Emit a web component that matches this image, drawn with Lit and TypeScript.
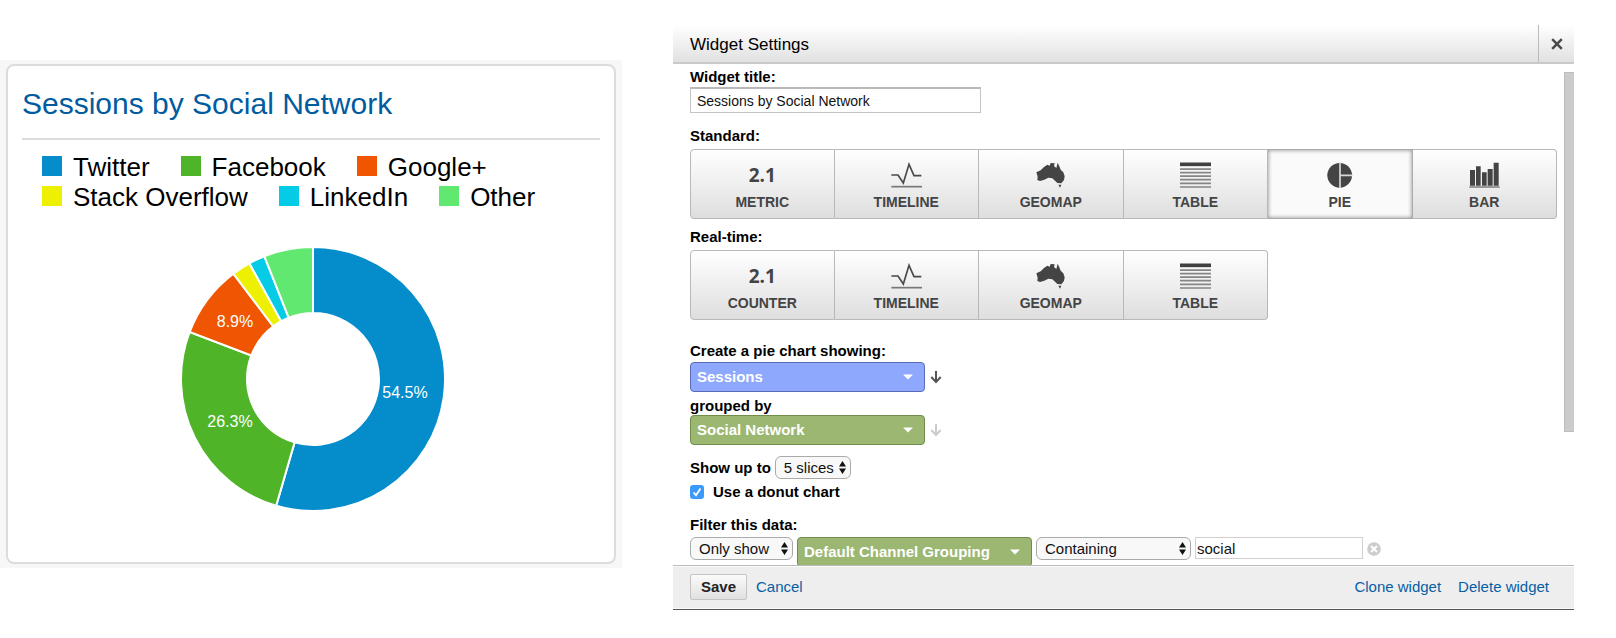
import { LitElement, html, svg, css } from "lit";
import { customElement, property, state } from "lit/decorators.js";
import { classMap } from "lit/directives/class-map.js";
import { styleMap } from "lit/directives/style-map.js";

interface Slice {
  name: string;
  share: number;
  color: string;
  label?: { x: number; y: number };
}

const SLICES: Slice[] = [
  { name: "Twitter", share: 54.5, color: "#058dcb", label: { x: 92, y: 13 } },
  { name: "Facebook", share: 26.3, color: "#50b428", label: { x: -83, y: 42 } },
  { name: "Google+", share: 8.9, color: "#f05602", label: { x: -78, y: -58 } },
  { name: "Stack Overflow", share: 2.3, color: "#edf000" },
  { name: "LinkedIn", share: 2, color: "#05cbe6" },
  { name: "Other", share: 6, color: "#60e870" },
];

const OUTER = 132;
const INNER = 66;

const point = (percent: number, radius: number) => {
  const angle = (percent / 100) * Math.PI * 2;
  return `${(Math.sin(angle) * radius).toFixed(2)} ${(-Math.cos(angle) * radius).toFixed(2)}`;
};

const ring = (from: number, to: number) => {
  const large = to - from > 50 ? 1 : 0;
  return `M${point(from, OUTER)}A${OUTER} ${OUTER} 0 ${large} 1 ${point(to, OUTER)}L${point(to, INNER)}A${INNER} ${INNER} 0 ${large} 0 ${point(from, INNER)}Z`;
};

@customElement("social-card")
class SocialCard extends LitElement {
  static styles = css`
    :host {
      display: block;
      padding: 4px 6px;
      background: #f7f7f7;
      color: #000;
    }
    .card {
      padding: 20px 14px 50px;
      background: #fff;
      border: 2px solid #dcdcdc;
      border-radius: 8px;
    }
    .title {
      margin: 0;
      padding-bottom: 16px;
      border-bottom: 2px solid #dcdcdc;
      color: #015c9f;
      font-size: 30px;
      font-weight: 400;
      line-height: 36px;
    }
    .legend {
      display: flex;
      flex-wrap: wrap;
      column-gap: 31px;
      margin: 12px 0 0;
      padding: 0 0 0 20px;
      list-style: none;
      font-size: 26px;
      line-height: 30px;
    }
    .entry {
      display: flex;
      align-items: baseline;
      gap: 11px;
    }
    .swatch {
      width: 20px;
      height: 20px;
    }
    .chart {
      display: block;
      width: 270px;
      height: 266px;
      margin: 34px auto 0;
    }
    .slice {
      stroke: #fff;
      stroke-width: 2;
    }
    .share {
      fill: #fff;
      font-size: 16px;
      text-anchor: middle;
      dominant-baseline: central;
    }
  `;

  render() {
    let from = 0;
    const slices = SLICES.map((s) => {
      const d = ring(from, from + s.share);
      from += s.share;
      return svg`<path class="slice" d=${d} fill=${s.color}></path>`;
    });
    return html`
      <section class="card">
        <h2 class="title">Sessions by Social Network</h2>
        <ul class="legend">
          ${SLICES.map(
            (s) => html`<li class="entry">
              <span class="swatch" style=${styleMap({ background: s.color })}></span>
              <span>${s.name}</span>
            </li>`
          )}
        </ul>
        <svg class="chart" viewBox="-137 -133 270 266" role="img">
          ${slices}
          ${SLICES.map((s) =>
            s.label
              ? svg`<text class="share" x=${s.label.x} y=${s.label.y}>${s.share}%</text>`
              : null
          )}
        </svg>
      </section>
    `;
  }
}

const ICONS: Record<string, unknown> = {
  timeline: html`<svg width="31" height="26" viewBox="677 425 93 78">
    <path d="M678 464H698L714 488 731 432 746 466H768" fill="none" stroke="#4a4a4a" stroke-width="5" />
    <path d="M678 499H770" stroke="#777" stroke-width="5" />
  </svg>`,
  geomap: html`<svg width="31" height="26" viewBox="468 35 93 78">
    <path
      fill="#444"
      d="M472 66L485 60 495 50 505 43 512 46 515 38 527 39 525 47 532 53 536 37 541 48 545 58 553 66 557 78 555 89 547 99 535 98 528 91 520 84 508 82 496 88 483 92 475 89 476 79ZM538 103L547 103 543 112Z"
    />
  </svg>`,
  table: html`<svg width="31" height="26" viewBox="121 425 93 78">
    <path d="M121 432H214" stroke="#404040" stroke-width="11" />
    <path
      d="M121 446.500H214M121 457H214M121 467.500H214M121 478H214M121 489H214M121 500H214"
      stroke="#858585"
      stroke-width="5"
    />
  </svg>`,
  pie: html`<svg width="31" height="26" viewBox="555 425 93 78">
    <circle cx="602" cy="465" r="37" fill="#444" />
    <path d="M603 426V504M603 465H641" stroke="#d8d8d8" stroke-width="5" />
  </svg>`,
  bar: html`<svg width="31" height="26" viewBox="987 425 93 78">
    <path
      fill="#444"
      d="M990 449H1005V496H990ZM1008 438H1022V496H1008ZM1026 456H1040V496H1026ZM1043 446H1058V496H1043ZM1061 427H1076V496H1061Z"
    />
    <path d="M988 500H1079" stroke="#888" stroke-width="5" />
  </svg>`,
};

interface Tile {
  label: string;
  icon: string;
}

const STANDARD: Tile[] = [
  { label: "METRIC", icon: "number" },
  { label: "TIMELINE", icon: "timeline" },
  { label: "GEOMAP", icon: "geomap" },
  { label: "TABLE", icon: "table" },
  { label: "PIE", icon: "pie" },
  { label: "BAR", icon: "bar" },
];

const REALTIME: Tile[] = [
  { label: "COUNTER", icon: "number" },
  { label: "TIMELINE", icon: "timeline" },
  { label: "GEOMAP", icon: "geomap" },
  { label: "TABLE", icon: "table" },
];

@customElement("type-tiles")
class TypeTiles extends LitElement {
  @property({ attribute: false }) tiles: Tile[] = [];
  @property() label = "";
  @state() selected = "";
  @property() initial = "";

  static styles = css`
    :host {
      display: block;
    }
    .grid {
      display: grid;
      grid-template-columns: repeat(6, 1fr);
    }
    .tile {
      display: flex;
      flex-direction: column;
      align-items: center;
      gap: 6px;
      margin: 0;
      padding: 12px 0 8px;
      border: 1px solid #b8b8b8;
      border-left-width: 0;
      background: linear-gradient(#fff, #dedede);
      color: #444;
      font: bold 14px/16px "Liberation Sans", Arial, sans-serif;
    }
    .tile:first-child {
      border-left-width: 1px;
      border-radius: 4px 0 0 4px;
    }
    .tile:last-child {
      border-radius: 0 4px 4px 0;
    }
    .selected {
      background: #fafafa;
      border-color: #aaa;
      box-shadow: inset 0 0 4px #888;
    }
    .icon {
      display: block;
      height: 26px;
    }
    .number {
      font: bold 19px/26px "Open Sans", sans-serif;
    }
  `;

  render() {
    const current = this.selected || this.initial;
    return html`<div class="grid" role="group" aria-label=${this.label}>
      ${this.tiles.map(
        (t) => html`<button
          type="button"
          class=${classMap({ tile: true, selected: t.label === current })}
          aria-pressed=${t.label === current ? "true" : "false"}
          @click=${() => (this.selected = t.label)}
        >
          ${t.icon === "number"
            ? html`<span class="icon number">2.1</span>`
            : html`<span class="icon">${ICONS[t.icon]}</span>`}
          <span>${t.label}</span>
        </button>`
      )}
    </div>`;
  }
}

@customElement("widget-settings")
class WidgetSettings extends LitElement {
  static styles = css`
    :host {
      display: flex;
      flex-direction: column;
      min-height: 0;
      color: #000;
      font-size: 15px;
      line-height: 18px;
    }
    .header {
      display: flex;
      align-items: stretch;
      flex: none;
      height: 37px;
      border-bottom: 2px solid #cacaca;
      background: linear-gradient(#fff, #e1e1e1);
    }
    .heading {
      flex: 1;
      margin: 0;
      padding-left: 17px;
      font-size: 17px;
      font-weight: 400;
      line-height: 39px;
    }
    .close {
      display: grid;
      place-items: center;
      width: 36px;
      padding: 0;
      border: 0;
      border-left: 1px solid #bbb;
      background: none;
    }
    .body {
      display: flex;
      flex: 1;
      gap: 7px;
      min-height: 0;
      overflow: hidden;
      padding-left: 17px;
    }
    .form {
      display: flex;
      flex-direction: column;
      flex: 1;
      min-width: 0;
      padding-top: 4px;
    }
    .form > * {
      flex: none;
    }
    .track {
      flex: none;
      width: 10px;
      padding-top: 8px;
    }
    .thumb {
      height: 73%;
      background: #cbcbcb;
      box-shadow: inset 1px 1px #bdbdbd, inset 0 -1px #bdbdbd;
    }
    .label {
      font-weight: 700;
    }
    .text {
      box-sizing: border-box;
      width: 291px;
      height: 26px;
      margin: 1px 0 14px;
      padding: 0 6px;
      border: 1px solid #c4c4c4;
      border-top: 2px solid #b9b9b9;
      border-radius: 0;
      background: #fff;
      color: #111;
      font: 14px/16px "Liberation Sans", Arial, sans-serif;
    }
    .tiles {
      margin-top: 4px;
    }
    .standard {
      margin-bottom: 9px;
    }
    .realtime {
      margin-bottom: 22px;
    }
    .row {
      display: flex;
      align-items: center;
    }
    .measure {
      gap: 5px;
      margin: 2px 0 5px;
    }
    .dimension {
      gap: 5px;
      margin-bottom: 11px;
    }
    .dropdown {
      display: grid;
      flex: none;
      align-items: center;
      justify-items: end;
    }
    .dropdown > * {
      grid-area: 1 / 1;
    }
    .dropdown svg {
      pointer-events: none;
    }
    .picker {
      box-sizing: border-box;
      width: 235px;
      height: 30px;
      padding: 0 6px;
      appearance: none;
      border: 1px solid;
      border-radius: 4px;
      color: #fff;
      font: bold 15px/18px "Liberation Sans", Arial, sans-serif;
    }
    .caret {
      margin-right: 12px;
    }
    .blue {
      background: #8ea8fe;
      border-color: #586db5;
    }
    .green {
      background: #9bb772;
      border-color: #728c4a;
    }
    .native {
      box-sizing: border-box;
      width: 76px;
      height: 23px;
      padding: 0 8px;
      appearance: none;
      border: 1px solid #aaa;
      border-radius: 6px;
      background: #f8f8f8;
      color: #111;
      font: 15px/18px "Liberation Sans", Arial, sans-serif;
    }
    .stepper {
      margin-right: 5px;
    }
    .only {
      width: 103px;
    }
    .match {
      width: 155px;
    }
    .slices {
      gap: 4px;
      margin-bottom: 4px;
    }
    .donut {
      gap: 9px;
      margin-bottom: 15px;
    }
    .tick {
      display: grid;
    }
    .tick > * {
      grid-area: 1 / 1;
    }
    .tick svg {
      pointer-events: none;
    }
    .box {
      width: 14px;
      height: 14px;
      margin: 0;
      appearance: none;
      border-radius: 3px;
      background: #3b99fc;
    }
    .filter {
      align-items: flex-start;
      gap: 4px;
      margin-top: 3px;
    }
    .value {
      box-sizing: border-box;
      width: 168px;
      height: 22px;
      padding: 0 1px;
      border: 1px solid #d0d0d0;
      border-radius: 0;
      color: #111;
      font: 15px/18px "Liberation Sans", Arial, sans-serif;
    }
    .remove {
      display: block;
      height: 26px;
      padding: 0;
      border: 0;
      background: none;
    }
    .footer {
      display: flex;
      align-items: center;
      flex: none;
      gap: 9px;
      padding: 8px 25px 9px 17px;
      border-top: 1px solid #bbb;
      border-bottom: 1px solid #555;
      background: #eee;
      box-shadow: inset 0 1px #fafafa, inset 0 -1px #fafafa;
    }
    .save {
      box-sizing: border-box;
      height: 26px;
      width: 57px;
      padding: 0;
      border: 1px solid #c4c4c4;
      border-radius: 2px;
      background: linear-gradient(#fbfbfb, #e0e0e0);
      color: #222;
      font: bold 15px/18px "Liberation Sans", Arial, sans-serif;
    }
    .link {
      color: #065fa5;
      text-decoration: none;
    }
    .extra {
      display: flex;
      gap: 17px;
      margin-left: auto;
    }
  `;

  private caret() {
    return html`<svg class="caret" width="10" height="6" viewBox="0 0 10 6">
      <path d="M0 .5H10L5 5.500Z" fill="#fff" />
    </svg>`;
  }

  private stepper() {
    return html`<svg class="stepper" width="7" height="13" viewBox="0 0 7 13">
      <path d="M0 5.500L3.500 0 7 5.500ZM0 7.500L3.500 13 7 7.500Z" fill="#111" />
    </svg>`;
  }

  private arrow(color: string) {
    return html`<svg width="12" height="14" viewBox="0 0 12 14">
      <path d="M6 1V12M1.300 7L6 12 10.700 7" fill="none" stroke=${color} stroke-width="2" />
    </svg>`;
  }

  render() {
    return html`
      <header class="header">
        <h2 class="heading">Widget Settings</h2>
        <button class="close" type="button" aria-label="Close">
          <svg width="12" height="12" viewBox="0 0 12 12">
            <path d="M1.200 1.200L10.800 10.800M10.800 1.200L1.200 10.800" stroke="#4a4a4a" stroke-width="2.500" />
          </svg>
        </button>
      </header>
      <div class="body">
        <div class="form">
          <label class="label" for="title">Widget title:</label>
          <input class="text" id="title" type="text" value="Sessions by Social Network" />

          <div class="label">Standard:</div>
          <type-tiles class="tiles standard" label="Standard" initial="PIE" .tiles=${STANDARD}></type-tiles>

          <div class="label">Real-time:</div>
          <type-tiles class="tiles realtime" label="Real-time" .tiles=${REALTIME}></type-tiles>

          <label class="label" for="measure">Create a pie chart showing:</label>
          <div class="row measure">
            <span class="dropdown">
              <select class="picker blue" id="measure"><option>Sessions</option></select>
              ${this.caret()}
            </span>
            ${this.arrow("#555")}
          </div>
          <label class="label" for="dimension">grouped by</label>
          <div class="row dimension">
            <span class="dropdown">
              <select class="picker green" id="dimension"><option>Social Network</option></select>
              ${this.caret()}
            </span>
            ${this.arrow("#ccc")}
          </div>

          <div class="row slices">
            <label class="label" for="slices">Show up to</label>
            <span class="dropdown">
              <select class="native" id="slices"><option>5 slices</option></select>
              ${this.stepper()}
            </span>
          </div>
          <div class="row donut">
            <span class="tick">
              <input class="box" id="donut" type="checkbox" checked />
              <svg width="14" height="14" viewBox="0 0 14 14">
                <path d="M3.500 7.500L6 10.200 10.500 3.500" fill="none" stroke="#fff" stroke-width="1.800" />
              </svg>
            </span>
            <label class="label" for="donut">Use a donut chart</label>
          </div>

          <div class="label">Filter this data:</div>
          <div class="row filter">
            <span class="dropdown">
              <select class="native only" aria-label="Filter mode"><option>Only show</option></select>
              ${this.stepper()}
            </span>
            <span class="dropdown">
              <select class="picker green" aria-label="Filter dimension"><option>Default Channel Grouping</option></select>
              ${this.caret()}
            </span>
            <span class="dropdown">
              <select class="native match" aria-label="Match type"><option>Containing</option></select>
              ${this.stepper()}
            </span>
            <input class="value" type="text" value="social" aria-label="Filter value" />
            <button class="remove" type="button" aria-label="Remove filter">
              <svg width="14" height="14" viewBox="0 0 14 14">
                <circle cx="7" cy="7" r="6.800" fill="#ccc" />
                <path d="M4 4L10 10M10 4L4 10" stroke="#fff" stroke-width="2" />
              </svg>
            </button>
          </div>
        </div>
        <div class="track"><div class="thumb"></div></div>
      </div>
      <footer class="footer">
        <button class="save" type="button">Save</button>
        <a class="link" href="#cancel">Cancel</a>
        <nav class="extra">
          <a class="link" href="#clone">Clone widget</a>
          <a class="link" href="#delete">Delete widget</a>
        </nav>
      </footer>
    `;
  }
}

@customElement("app-root")
class AppRoot extends LitElement {
  static styles = css`
    :host {
      display: grid;
      grid-template-columns: minmax(0, 622fr) minmax(0, 901fr);
      grid-template-rows: minmax(0, 1fr);
      column-gap: 51px;
      box-sizing: border-box;
      height: 100vh;
      padding: 25px 42px 28px 0;
      background: #fff;
      font-family: "Liberation Sans", Arial, sans-serif;
    }
    .summary {
      align-self: start;
      margin-top: 35px;
    }
  `;

  render() {
    return html`
      <social-card class="summary"></social-card>
      <widget-settings></widget-settings>
    `;
  }
}
